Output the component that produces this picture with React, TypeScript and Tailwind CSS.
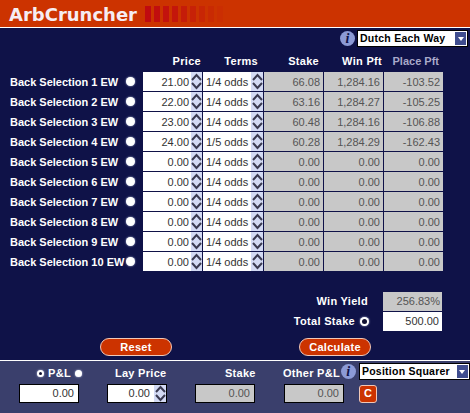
const rows = [
  ['21.00', '1/4 odds', '66.08', '1,284.16', '-103.52'],
  ['22.00', '1/4 odds', '63.16', '1,284.27', '-105.25'],
  ['23.00', '1/4 odds', '60.48', '1,284.16', '-106.88'],
  ['24.00', '1/5 odds', '60.28', '1,284.29', '-162.43'],
  ['0.00', '1/4 odds', '0.00', '0.00', '0.00'],
  ['0.00', '1/4 odds', '0.00', '0.00', '0.00'],
  ['0.00', '1/4 odds', '0.00', '0.00', '0.00'],
  ['0.00', '1/4 odds', '0.00', '0.00', '0.00'],
  ['0.00', '1/4 odds', '0.00', '0.00', '0.00'],
  ['0.00', '1/4 odds', '0.00', '0.00', '0.00'],
];

const bars = [1, 0.9, 0.8, 0.7, 0.55, 0.45, 0.3, 0.2, 0.1];

function Spinner({ line }: { line?: boolean }) {
  return (
    <div className={`flex h-full w-[12px] shrink-0 flex-col items-center justify-center bg-[#d3daf4] text-[#3a3a50] ${line ? 'border-r border-[#0f1248]' : ''}`}>
      <svg width="11" height="8" viewBox="0 0 11 8" fill="none" stroke="currentColor" strokeWidth="2">
        <polyline points="1,7 5.5,2 10,7" />
      </svg>
      <svg width="11" height="8" viewBox="0 0 11 8" fill="none" stroke="currentColor" strokeWidth="2" className="mt-px">
        <polyline points="1,1 5.5,6 10,1" />
      </svg>
    </div>
  );
}

function Radio({ on, small }: { on?: boolean; small?: boolean }) {
  return (
    <div className={`flex shrink-0 items-center justify-center rounded-full bg-white shadow-[0_0_2px_#cfd6f2] ${small ? 'h-[7px] w-[7px]' : 'h-[9px] w-[9px]'}`}>
      {on && <div className={`rounded-full bg-[#111133] ${small ? 'h-[3px] w-[3px]' : 'h-[5px] w-[5px]'}`} />}
    </div>
  );
}

function Info() {
  return (
    <div className="flex h-[15px] w-[15px] shrink-0 items-center justify-center rounded-full bg-[#8c9ad6] font-['Liberation_Serif',serif] text-[14px] font-bold italic leading-none text-[#0f1248]">
      i
    </div>
  );
}

function Select({ label }: { label: string }) {
  return (
    <div className="flex h-[17px] w-[111px] items-center justify-between border border-black bg-white pl-[2px] pr-[1px] text-[10.5px] font-bold tracking-[0.25px] text-black">
      <span>{label}</span>
      <div className="flex h-[13px] w-[11px] shrink-0 items-center justify-center bg-[#3f4d8f]">
        <div className="h-0 w-0 border-x-[3px] border-t-[4px] border-x-transparent border-t-white" />
      </div>
    </div>
  );
}

function Pill({ label }: { label: string }) {
  return (
    <div className="flex h-[18px] w-[72px] items-center justify-center rounded-full border border-[#f0c8b8] bg-[#cc3300] text-[11px] font-bold tracking-[0.3px] text-white">
      {label}
    </div>
  );
}

function Box({ value, grey, spin }: { value: string; grey?: boolean; spin?: boolean }) {
  return (
    <div className={`flex h-[19px] w-[60px] items-center justify-end border border-black text-[11px] ${spin ? 'pr-[16px]' : 'pr-[4px]'} ${grey ? 'bg-[#c8c8c8] text-[#555]' : 'bg-white text-[#333]'}`}>
      {value}
    </div>
  );
}

export default function App() {
  return (
    <div className="flex h-[413px] w-[470px] flex-col overflow-hidden whitespace-nowrap bg-[#0f1248] font-['Liberation_Sans',Arial,sans-serif] text-white">
      <div className="flex h-[28px] shrink-0 items-center gap-[8px] border-b border-white bg-[#cc3300] pl-[9px] pt-px">
        <span className="font-['DejaVu_Sans',sans-serif] text-[18px] font-bold text-[#f6ecf2]">ArbCruncher</span>
        <div className="flex h-[16px] gap-[3px]">
          {bars.map((o, i) => (
            <div key={i} className="h-full w-[6px] bg-[#c00a10]" style={{ opacity: o }} />
          ))}
        </div>
      </div>

      <div className="mt-[2px] flex h-[17px] items-center justify-end gap-[2px] pr-[2px]">
        <Info />
        <Select label="Dutch Each Way" />
      </div>

      <div className="mt-[5px] grid h-[18px] grid-cols-[143px_60px_60px_60px_60px_60px] items-center text-right text-[11px] font-bold tracking-[0.3px]">
        <span />
        <span className="pr-[2px]">Price</span>
        <span className="pr-[5px]">Terms</span>
        <span className="pr-[4px]">Stake</span>
        <span className="pr-[1px]">Win Pft</span>
        <span className="pr-[4px] tracking-normal text-[#a9a9c9]">Place Pft</span>
      </div>

      <div className="mt-[2px] flex flex-col gap-px">
        {rows.map((r, i) => (
          <div key={i} className="grid h-[19px] grid-cols-[143px_60px_60px_60px_60px_60px] text-[11px]">
            <div className="relative flex items-center pl-[10px] pt-px text-[11px] font-bold">
              <span>Back Selection {i + 1} EW</span>
              <div className="absolute right-[8px] top-[5px]"><Radio /></div>
            </div>
            <div className="flex items-center justify-end bg-white text-[#333]">
              <span className="pr-[2px] pt-px">{r[0]}</span>
              <Spinner line />
            </div>
            <div className="flex items-center justify-between bg-white pl-[3px] text-[#333]">
              <span className="pt-px">{r[1]}</span>
              <Spinner />
            </div>
            <div className="flex items-center justify-end border-l border-[#0f1248] bg-[#c8c8c8] pr-[3px] pt-px text-[#555]">{r[2]}</div>
            <div className="flex items-center justify-end border-l border-[#0f1248] bg-[#c8c8c8] pr-[3px] pt-px text-[#555]">{r[3]}</div>
            <div className="flex items-center justify-end border-l border-[#0f1248] bg-[#c8c8c8] pr-[3px] pt-px text-[#555]">{r[4]}</div>
          </div>
        ))}
      </div>

      <div className="mt-[21px] flex justify-end pr-[28px]">
        <div className="flex items-center gap-[15px] text-[11px] font-bold tracking-[0.3px]">
          <span>Win Yield</span>
          <div className="flex h-[19px] w-[59px] items-center justify-end bg-[#c8c8c8] pr-[2px] text-[11px] font-normal tracking-normal text-[#555]">256.83%</div>
        </div>
      </div>
      <div className="mt-px flex justify-end pr-[28px]">
        <div className="flex items-center text-[11px] font-bold tracking-[0.3px]">
          <span>Total Stake</span>
          <div className="ml-[5px] mr-[14px]"><Radio on /></div>
          <div className="flex h-[19px] w-[59px] items-center justify-end bg-white pr-[3px] text-[11px] font-normal tracking-normal text-[#333]">500.00</div>
        </div>
      </div>

      <div className="mt-[7px] flex pl-[100px]">
        <Pill label="Reset" />
        <div className="ml-[127px]"><Pill label="Calculate" /></div>
      </div>

      <div className="mt-[4px] flex flex-1 flex-col border-t border-white bg-[#3a3f6c] pt-[2px] text-[11px] font-bold tracking-[0.3px]">
        <div className="flex h-[17px] items-center">
          <div className="ml-[37px] flex items-center gap-[4px] pt-[3px]">
            <Radio on small />
            <span>P&amp;L</span>
            <Radio small />
          </div>
          <span className="ml-[33px] w-[52px] pt-[3px]">Lay Price</span>
          <span className="ml-[58px] w-[32px] pt-[3px]">Stake</span>
          <span className="ml-[26px] w-[56px] pt-[3px]">Other P&amp;L</span>
          <div className="ml-[2px]"><Info /></div>
          <div className="ml-[3px]"><Select label="Position Squarer" /></div>
        </div>
        <div className="mt-[4px] flex items-center font-normal tracking-normal">
          <div className="ml-[19px]"><Box value="0.00" /></div>
          <div className="ml-[28px] flex h-[19px] items-center">
            <div className="relative">
              <Box value="0.00" spin />
              <div className="absolute right-px top-px h-[17px]"><Spinner /></div>
            </div>
          </div>
          <div className="ml-[28px]"><Box value="0.00" grey /></div>
          <div className="ml-[29px]"><Box value="0.00" grey /></div>
          <div className="ml-[15px] flex h-[18px] w-[18px] items-center justify-center rounded-[3px] border border-[#f0c8b8] bg-[#cc3300] text-[11px] font-bold text-white">C</div>
        </div>
      </div>
    </div>
  );
}
